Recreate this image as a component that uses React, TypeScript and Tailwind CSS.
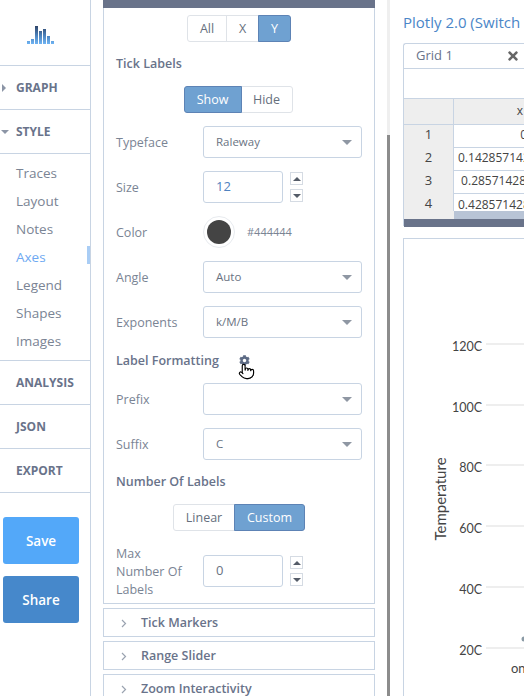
import { FaCog, FaTimes } from "react-icons/fa";
import { Pointer } from "lucide-react";

const styleItems = ["Traces", "Layout", "Notes", "Axes", "Legend", "Shapes", "Images"];
const yTicks = ["120C", "100C", "80C", "60C", "40C", "20C"];

function Logo() {
  // bar heights picked off the reference
  const bars = [3, 5, 18, 13, 15, 8, 3];
  return (
    <svg width="27" height="18" viewBox="0 0 27 18" className="block">
      <defs>
        <linearGradient id="logoFill" gradientUnits="userSpaceOnUse" x1="0" y1="0" x2="0" y2="18">
          <stop offset="0" stopColor="#2f4468" />
          <stop offset="0.5" stopColor="#4a7fb8" />
          <stop offset="1" stopColor="#6fb4f4" />
        </linearGradient>
      </defs>
      {bars.map((h, i) => (
        <rect key={i} x={i * 4} y={18 - h} width="3" height={h} fill="url(#logoFill)" />
      ))}
    </svg>
  );
}

function NavHead({ label, arrow }: { label: string; arrow?: "right" | "down" }) {
  return (
    <div className="relative flex h-11 items-center border-b border-[#c8d4e3] pl-4 text-[12px] font-bold text-[#69738a]">
      {arrow === "right" && (
        <span className="absolute left-[2px] top-[18px] h-0 w-0 border-y-[4px] border-l-[4px] border-y-transparent border-l-[#8c95a6]" />
      )}
      {arrow === "down" && (
        <span className="absolute left-[1px] top-[20px] h-0 w-0 border-x-[4px] border-t-[4px] border-x-transparent border-t-[#8c95a6]" />
      )}
      {label}
    </div>
  );
}

function Sidebar() {
  return (
    <div className="flex w-[91px] shrink-0 flex-col border-r border-[#c8d4e3]">
      <div className="flex h-[65px] items-end pb-[21px] pl-[27px]">
        <Logo />
      </div>
      <div className="border-t border-[#c8d4e3]">
        <NavHead label="GRAPH" arrow="right" />
        <NavHead label="STYLE" arrow="down" />
      </div>
      <div className="flex h-[207px] flex-col border-b border-[#c8d4e3] pt-[4px]">
        {styleItems.map((item) => (
          <div
            key={item}
            className={`relative flex h-7 items-center pl-4 pt-[2px] text-[13.5px] ${item === "Axes" ? "text-[#6ea9f2]" : "text-[#7a8494]"}`}
          >
            {item}
            {item === "Axes" && <span className="absolute right-0 top-[4px] h-[18px] w-[3px] bg-[#a9cdf5]" />}
          </div>
        ))}
      </div>
      <NavHead label="ANALYSIS" />
      <NavHead label="JSON" />
      <NavHead label="EXPORT" />
      <div className="mt-[24px] flex flex-col gap-3 pl-[3px]">
        <button className="h-[47px] w-[76px] rounded-[3px] bg-[#53a8f9] pt-[2px] text-[13.5px] font-semibold text-white">Save</button>
        <button className="h-[47px] w-[76px] rounded-[3px] bg-[#4688cb] pt-[2px] text-[13.5px] font-semibold text-white">Share</button>
      </div>
    </div>
  );
}

function Toggle({ items, active, widths }: { items: string[]; active: string; widths: string[] }) {
  return (
    <div className="flex h-[27px] justify-center text-[12.5px]">
      {items.map((item, i) => (
        <div
          key={item}
          className={`flex items-center justify-center border pt-[2px] ${widths[i]} ${i === 0 ? "rounded-l-[3px]" : "-ml-px"} ${i === items.length - 1 ? "rounded-r-[3px]" : ""} ${
            item === active
              ? "z-10 border-[#5d83b5] bg-[#6fa1d1] text-white"
              : "border-[#dfe3e8] bg-white text-[#666f7d]"
          }`}
        >
          {item}
        </div>
      ))}
    </div>
  );
}

function Row({ label, className, children }: { label: string; className?: string; children: React.ReactNode }) {
  return (
    <div className={`flex h-8 items-center pr-3 ${className ?? ""}`}>
      <div className="w-[87px] pr-[15px] pt-[2px] text-[12.5px] leading-[18px] text-[#7a8494]">{label}</div>
      {children}
    </div>
  );
}

function Select({ value }: { value?: string }) {
  return (
    <div className="flex h-8 w-[159px] items-center justify-between rounded-[3px] border border-[#c8d4e3] pl-3 pr-[9px] text-[11.5px] text-[#6a7382]">
      <span>{value}</span>
      <span className="h-0 w-0 border-x-[5px] border-t-[5px] border-x-transparent border-t-[#8f97a3]" />
    </div>
  );
}

function NumberInput({ value, color }: { value: string; color: string }) {
  return (
    <>
      <div className={`flex h-8 w-20 items-center rounded-[3px] border border-[#c8d4e3] pl-3 text-[13px] ${color}`}>{value}</div>
      <div className="ml-[7px] flex flex-col gap-[4px]">
        <span className="flex h-[13px] w-[13px] items-center justify-center border border-[#d5dbe3]">
          <span className="h-0 w-0 border-x-[4px] border-b-[4px] border-x-transparent border-b-[#555c68]" />
        </span>
        <span className="flex h-[13px] w-[13px] items-center justify-center border border-[#d5dbe3]">
          <span className="h-0 w-0 border-x-[4px] border-t-[4px] border-x-transparent border-t-[#555c68]" />
        </span>
      </div>
    </>
  );
}

function SectionTitle({ children, className }: { children: React.ReactNode; className?: string }) {
  return <div className={`h-[18px] pt-[1px] text-[12.5px] font-semibold leading-[18px] text-[#69738a] ${className ?? ""}`}>{children}</div>;
}

function Fold({ label }: { label: string }) {
  return (
    <div className="mt-[4px] flex h-[29px] shrink-0 items-center border border-[#c8d4e3] pl-[17px] pt-[2px] text-[12.5px] font-semibold text-[#69738a]">
      <svg width="6" height="9" viewBox="0 0 6 9" className="mr-[14px]">
        <path d="M1 1l3.5 3.5L1 8" fill="none" stroke="#9aa3b0" strokeWidth="1.2" />
      </svg>
      {label}
    </div>
  );
}

function Panel() {
  return (
    <div className="ml-3 flex w-[272px] shrink-0 flex-col">
      <div className="h-[8px] shrink-0 bg-[#69738a]" />
      <div className="h-[596px] shrink-0 border-x border-b border-[#c8d4e3] pl-3 pt-[7px]">
        <div className="-ml-3">
          <Toggle items={["All", "X", "Y"]} active="Y" widths={["w-[40px]", "w-[33px]", "w-[33px]"]} />
        </div>
        <SectionTitle className="mt-[12px]">Tick Labels</SectionTitle>
        <div className="-ml-[14px] mt-[14px]">
          <Toggle items={["Show", "Hide"]} active="Show" widths={["w-[58px]", "w-[52px]"]} />
        </div>
        <Row label="Typeface" className="mt-[13px]">
          <Select value="Raleway" />
        </Row>
        <Row label="Size" className="mt-[13px]">
          <NumberInput value="12" color="text-[#4f82c0]" />
        </Row>
        <Row label="Color" className="mt-[13px]">
          <span className="flex h-[32px] w-[32px] items-center justify-center rounded-full border border-[#e8ebef]">
            <span className="h-[24px] w-[24px] rounded-full bg-[#444444]" />
          </span>
          <span className="ml-[12px] text-[11px] text-[#7a8494]">#444444</span>
        </Row>
        <Row label="Angle" className="mt-[13px]">
          <Select value="Auto" />
        </Row>
        <Row label="Exponents" className="mt-[13px]">
          <Select value="k/M/B" />
        </Row>
        <div className="relative mt-[13px] flex h-[18px] items-center">
          <SectionTitle>Label Formatting</SectionTitle>
          <FaCog className="ml-[20px] text-[11px] text-[#5d6b85]" />
          <Pointer size={17} strokeWidth={1.6} fill="#ffffff" className="absolute left-[122px] top-[12px] text-black" />
        </div>
        <Row label="Prefix" className="mt-[14px]">
          <Select />
        </Row>
        <Row label="Suffix" className="mt-[13px]">
          <Select value="C" />
        </Row>
        <SectionTitle className="mt-[12px]">Number Of Labels</SectionTitle>
        <div className="-ml-3 mt-[14px]">
          <Toggle items={["Linear", "Custom"]} active="Custom" widths={["w-[62px]", "w-[71px]"]} />
        </div>
        <Row label="Max Number Of Labels" className="mt-[24px]">
          <NumberInput value="0" color="text-[#6a7382]" />
        </Row>
      </div>
      <Fold label="Tick Markers" />
      <Fold label="Range Slider" />
      <Fold label="Zoom Interactivity" />
    </div>
  );
}

function Scrollbar() {
  return (
    <div className="ml-3 w-[3px] shrink-0 bg-[#efefef] pt-[135px]">
      <div className="h-full bg-[#8c8c8c]" />
    </div>
  );
}

function GridRow({ n, value, last }: { n: string; value: string; last?: boolean }) {
  return (
    <div className={`flex shrink-0 ${last ? "h-[17px] overflow-hidden" : "h-[23px]"} text-[12px] text-[#444444]`}>
      <div className="flex w-[50px] shrink-0 justify-center border-r border-[#c8d4e3] bg-[#eeeeee] text-[13px] leading-[18px]">{n}</div>
      <div className={`flex-1 overflow-hidden whitespace-nowrap ${last ? "pt-[3px]" : "border-b border-[#c8d4e3] pt-[2px]"} pl-[4px] leading-[16px]`}>
        {value}
      </div>
    </div>
  );
}

function Grid() {
  return (
    <div className="h-[183px] w-[140px] shrink-0 rounded-tl-[3px] border-l border-t border-[#c8d4e3]">
      <div className="flex h-[25px] items-center justify-between border-b border-[#c8d4e3] pl-[12px] pr-[23px] text-[13px] text-[#69738a]">
        Grid 1
        <FaTimes className="text-[14px] text-[#666666]" />
      </div>
      <div className="h-[30px] border-b border-[#c8d4e3]" />
      <div className="flex h-[26px] border-b border-[#c8d4e3] bg-[#eeeeee]">
        <div className="w-[50px] border-r border-[#c8d4e3]" />
        <div className="flex-1 pr-[20px] pt-[4px] text-right text-[12px] leading-[16px] text-[#444444]">x</div>
      </div>
      <GridRow n="1" value={"\u00a0\u00a0\u00a0\u00a0\u00a0\u00a0\u00a0\u00a0\u00a0\u00a0\u00a0\u00a0\u00a0\u00a0\u00a0\u00a0\u00a0\u00a0\u00a0\u00a00"} />
      <GridRow n="2" value="0.142857142" />
      <GridRow n="3" value={"\u00a00.285714285"} />
      <GridRow n="4" value="0.428571428" last />
      <div className="flex h-[8px]">
        <div className="w-[50px] bg-[#eeeeee]" />
        <div className="flex-1 bg-[#b8c4d6]" />
      </div>
      <div className="h-[8px] bg-[#69738a]" />
    </div>
  );
}

function Chart() {
  return (
    <div className="mt-[12px] h-[470px] w-[140px] shrink-0 border-l border-t border-[#c8d4e3]">
      {/* plot area is its own canvas, coordinates relative to the panel */}
      <svg width="120" height="470" viewBox="0 0 120 470" className="block">
        {yTicks.map((t, i) => {
          const y = [105, 166, 226, 287, 348, 409][i];
          return (
            <g key={t}>
              <line x1="82" x2="120" y1={y} y2={y} stroke="#eeeeee" strokeWidth="2" />
              <text x="78" y={y + 7} textAnchor="end" fontFamily="Lato, sans-serif" fontSize="12.5" fill="#444444">
                {t}
              </text>
            </g>
          );
        })}
        <text
          transform="translate(42 260) rotate(-90)"
          textAnchor="middle"
          fontFamily="Lato, sans-serif"
          fontSize="15"
          fill="#444444"
        >
          Temperature
        </text>
        <circle cx="120" cy="400" r="2.5" fill="#8a9aa5" />
        <text x="107" y="434" fontFamily="Lato, sans-serif" fontSize="13" fill="#444444">
          on
        </text>
      </svg>
    </div>
  );
}

export default function App() {
  return (
    <div
      className="flex h-[696px] w-[524px] overflow-hidden bg-white"
      style={{ fontFamily: '"Open Sans", sans-serif' }}
    >
      <Sidebar />
      <Panel />
      <Scrollbar />
      <div className="ml-[13px] flex min-w-0 flex-col">
        <div className="h-[43px] shrink-0 whitespace-nowrap pt-[12px] text-[15px] leading-[20px] text-[#4a86c8]">
          Plotly 2.0 (Switch
        </div>
        <Grid />
        <Chart />
      </div>
    </div>
  );
}
